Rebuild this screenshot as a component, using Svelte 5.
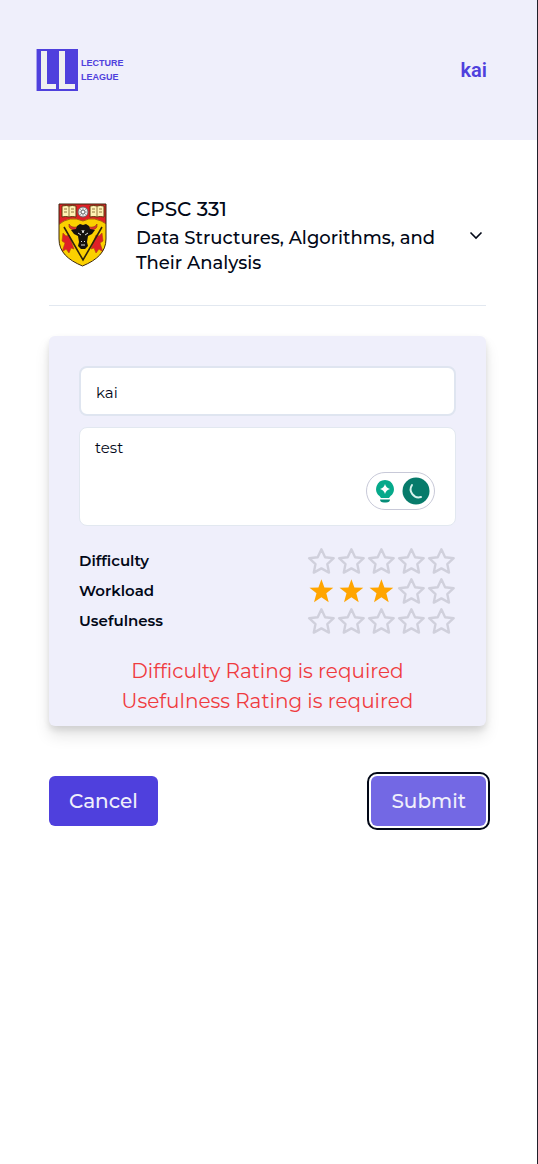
<script>
  let name = $state('kai');
  let review = $state('test');
  let ratings = $state([
    { label: 'Difficulty', value: 0 },
    { label: 'Workload', value: 3 },
    { label: 'Usefulness', value: 0 }
  ]);
  let missing = $derived(ratings.filter((r) => r.value === 0));
</script>

<div class="page">
  <header>
    <a class="logo" href="#home">
      <svg width="42" height="42" viewBox="0 0 42 42" aria-hidden="true">
        <path fill="#4f40dd" d="M0 0h42v42H0z" />
        <path fill="#a9a2ee" d="M0 0h1v42H0z" />
        <path fill="#efeff0" d="M5 2h6v33h9v5H5zM23 2h6v33h10v5H23z" />
      </svg>
      <span>LECTURE<br />LEAGUE</span>
    </a>
    <a class="user" href="#profile">kai</a>
  </header>

  <main>
    <section class="course">
      <svg class="crest" width="50" height="64" viewBox="0 0 50 64" aria-hidden="true">
        <defs>
          <clipPath id="shield"><path d="M1 1h47v35c0 13-9 21-23.500 27C10 57 1 49 1 36z" /></clipPath>
        </defs>
        <g clip-path="url(#shield)">
          <path fill="#fbd000" d="M0 0h50v64H0z" />
          <path fill="#df2027" d="M0 0h50v22Q36 12 25 18Q12 12 0 22z" />
          <path d="M0 22Q12 12 25 18Q36 12 50 22" fill="none" stroke="#a86310" />
          <path fill="#df2027" stroke="#ae4810" stroke-width=".6" d="M5 30l3 3 3-1 5 14-3-1-2 5-3-4-4 3 3-9-3-2zM44 30l-3 3-3-1-5 14 3-1 2 5 3-4 4 3-3-9 3-2z" />
          <path fill="none" stroke="#31230b" stroke-width="1.600" d="M6 24l19 33 19-33" />
        </g>
        <path d="M4 3q5-1 7 0q3-1 7 0v11q-4-1-7 0q-3-1-7 0zM32 3q4-1 7 0q3-1 7 0v11q-4-1-7 0q-3-1-7 0z" fill="#fff2b5" stroke="#5c380c" />
        <path d="M11 3v11M39 3v11M6 6h3M13 6h3M6 9h3M13 9h3M34 6h3M41 6h3M34 9h3M41 9h3" stroke="#79571e" stroke-width=".8" />
        <circle cx="25" cy="9" r="5" fill="#eee" stroke="#666" />
        <path d="M25 5v8M21 9h8M22 6l6 6M28 6l-6 6" stroke="#aaa" />
        <circle cx="25" cy="9" r="2" fill="#fff" stroke="#666" />
        <path d="M18 27q-8 0-7-6 2 4 8 3zM32 27q8 0 7-6-2 4-8 3z" fill="#df3430" stroke="#8b2718" stroke-width=".6" />
        <path d="M19 23l3-2 3 1 3-1 3 2 1 3 5 1-3 4-4 2-1 6 1 4-3 3h-4l-3-3 1-4-1-6-4-2-3-4 5-1z" fill="#15120f" />
        <path d="M20 30l3 2M30 30l-3 2M24 27l1 3 1-3M23 42h4M23 38l1 1M27 38l-1 1" stroke="#ddd" fill="none" />
        <path d="M1 1h47v35c0 13-9 21-23.500 27C10 57 1 49 1 36z" fill="none" stroke="#3d2810" />
      </svg>
      <div class="title">
        <h1>CPSC 331</h1>
        <p>Data Structures, Algorithms, and Their Analysis</p>
      </div>
      <button class="toggle" type="button" aria-label="Course details">
        <svg width="16" height="16" viewBox="0 0 16 16" aria-hidden="true">
          <path d="M2.500 5.500L8 11l5.500-5.500" fill="none" stroke="#020817" stroke-width="1.600" />
        </svg>
      </button>
    </section>

    <form onsubmit={(e) => e.preventDefault()}>
      <div class="card">
        <input class="name" type="text" aria-label="Name" bind:value={name} />
        <div class="review">
          <textarea aria-label="Review" bind:value={review}></textarea>
          <div class="assist">
            <svg width="20" height="24" viewBox="0 0 20 24" aria-hidden="true">
              <path fill="#05a98a" d="M10 1a9 9 0 0 1 5.500 16l-1.500 2H6l-1.500-2A9 9 0 0 1 10 1z" />
              <path fill="#fff" d="M10 5q1 4 5 5-4 1-5 5-1-4-5-5 4-1 5-5z" />
              <path fill="#058d78" d="M5 20.500h10q0 3-4 3H9q-4 0-4-3z" />
            </svg>
            <svg width="28" height="28" viewBox="0 0 28 28" aria-hidden="true">
              <circle cx="14" cy="14" r="13.500" fill="#077b6b" />
              <path d="M10 8a8 8 0 0 0 9 12" fill="none" stroke="#d7f3ed" stroke-width="2" stroke-linecap="round" />
            </svg>
          </div>
        </div>

        <div class="ratings">
          {#each ratings as rating}
            <div class="rating" role="group" aria-label={rating.label}>
              <span>{rating.label}</span>
              <div class="stars">
                {#each [1, 2, 3, 4, 5] as n}
                  <button type="button" aria-label={`${rating.label} ${n}`} onclick={() => (rating.value = n)}>
                    <svg width="30" height="30" viewBox="0 0 30 30" aria-hidden="true">
                      {#if n <= rating.value}
                        <path fill="#ffa500" d="M15.400 3.300l3 8.200 8.900.3-7 5.500 2.400 9-7.300-5-7.400 5 2.500-9-7-5.500 8.900-.3z" />
                      {:else}
                        <path fill="none" stroke="#d0d0dc" stroke-width="2.400" stroke-linejoin="round" d="M15.400 3.300l3.700 7.900 8.600 1-6.400 5.900 1.700 8.500-7.600-4.200-7.600 4.200 1.700-8.500-6.400-5.900 8.600-1z" />
                      {/if}
                    </svg>
                  </button>
                {/each}
              </div>
            </div>
          {/each}
        </div>

        <div class="errors" role="alert">
          {#each missing as m}
            <p>{m.label} Rating is required</p>
          {/each}
        </div>
      </div>

      <div class="actions">
        <button type="button">Cancel</button>
        <button class="submit" type="submit">Submit</button>
      </div>
    </form>
  </main>
</div>

<style>
  :global(body) {
    margin: 0;
    background: #fff;
  }
  .page {
    box-sizing: border-box;
    min-height: 100vh;
    border-right: 1px solid #20202a;
    color: #020817;
    font-family: Montserrat, Inter, sans-serif;
  }
  .page * {
    box-sizing: border-box;
  }
  h1,
  p {
    margin: 0;
    font-weight: 500;
  }
  button {
    padding: 0;
    border: 0;
    background: none;
    color: inherit;
    font: inherit;
    cursor: pointer;
  }
  svg {
    display: block;
    flex: none;
  }
  header {
    display: flex;
    align-items: center;
    justify-content: space-between;
    height: 140px;
    padding: 0 50px 0 36px;
    background: #efeffb;
  }
  header a {
    color: #4f40dd;
    text-decoration: none;
  }
  .logo {
    display: flex;
    align-items: center;
    gap: 3px;
    font: bold 9px/14px "Liberation Sans Narrow", "Liberation Sans", sans-serif;
  }
  .user {
    font: 600 20px/30px Roboto, Inter, sans-serif;
  }
  main {
    padding: 54px 51px 0 49px;
  }
  .course {
    display: flex;
    align-items: center;
    gap: 28px;
    padding: 0 2px 29px 9px;
    border-bottom: 1px solid #e2e8f0;
  }
  .title {
    flex: 1;
  }
  h1 {
    font-size: 20px;
    line-height: 30px;
  }
  .title p {
    margin-top: 2px;
    font-size: 18px;
    line-height: 25px;
  }
  .card {
    margin-top: 30px;
    padding: 30px 30px 10px;
    border-radius: 6px;
    background: #efeffb;
    box-shadow: 0 10px 15px rgb(0 0 0 / 10%), 0 4px 6px rgb(0 0 0 / 10%);
  }
  input,
  textarea {
    display: block;
    width: 100%;
    margin: 0;
    border: 1px solid #e2e8f0;
    border-radius: 8px;
    outline: 0;
    background: #fff;
    color: inherit;
    font: 400 15px/20px Montserrat, Inter, sans-serif;
  }
  .name {
    height: 50px;
    padding: 3px 15px 0;
    border: 2px solid #dfe5f0;
  }
  .review {
    position: relative;
    margin-top: 11px;
  }
  textarea {
    height: 99px;
    padding: 10px 15px;
    resize: none;
  }
  .assist {
    position: absolute;
    right: 21px;
    bottom: 16px;
    display: flex;
    align-items: center;
    gap: 7px;
    padding: 4px 4px 4px 8px;
    border: 1px solid #c8c9d8;
    border-radius: 20px;
    background: #fff;
  }
  .ratings {
    margin: 20px 0;
  }
  .rating {
    display: flex;
    align-items: center;
    justify-content: space-between;
    font-size: 15px;
    font-weight: 600;
    line-height: 30px;
  }
  .stars {
    display: flex;
  }
  .errors {
    color: #ef3b3f;
    font-size: 20px;
    line-height: 30px;
    text-align: center;
  }
  .errors p {
    font-weight: 400;
  }
  .actions {
    display: flex;
    justify-content: space-between;
    margin-top: 50px;
  }
  .actions button {
    height: 50px;
    padding: 0 20px;
    border-radius: 6px;
    background: #4f40dd;
    color: #efeffb;
    font-size: 20px;
    font-weight: 500;
  }
  .actions .submit {
    background: #7368e4;
    outline: 2px solid #020817;
    outline-offset: 2px;
  }
</style>
